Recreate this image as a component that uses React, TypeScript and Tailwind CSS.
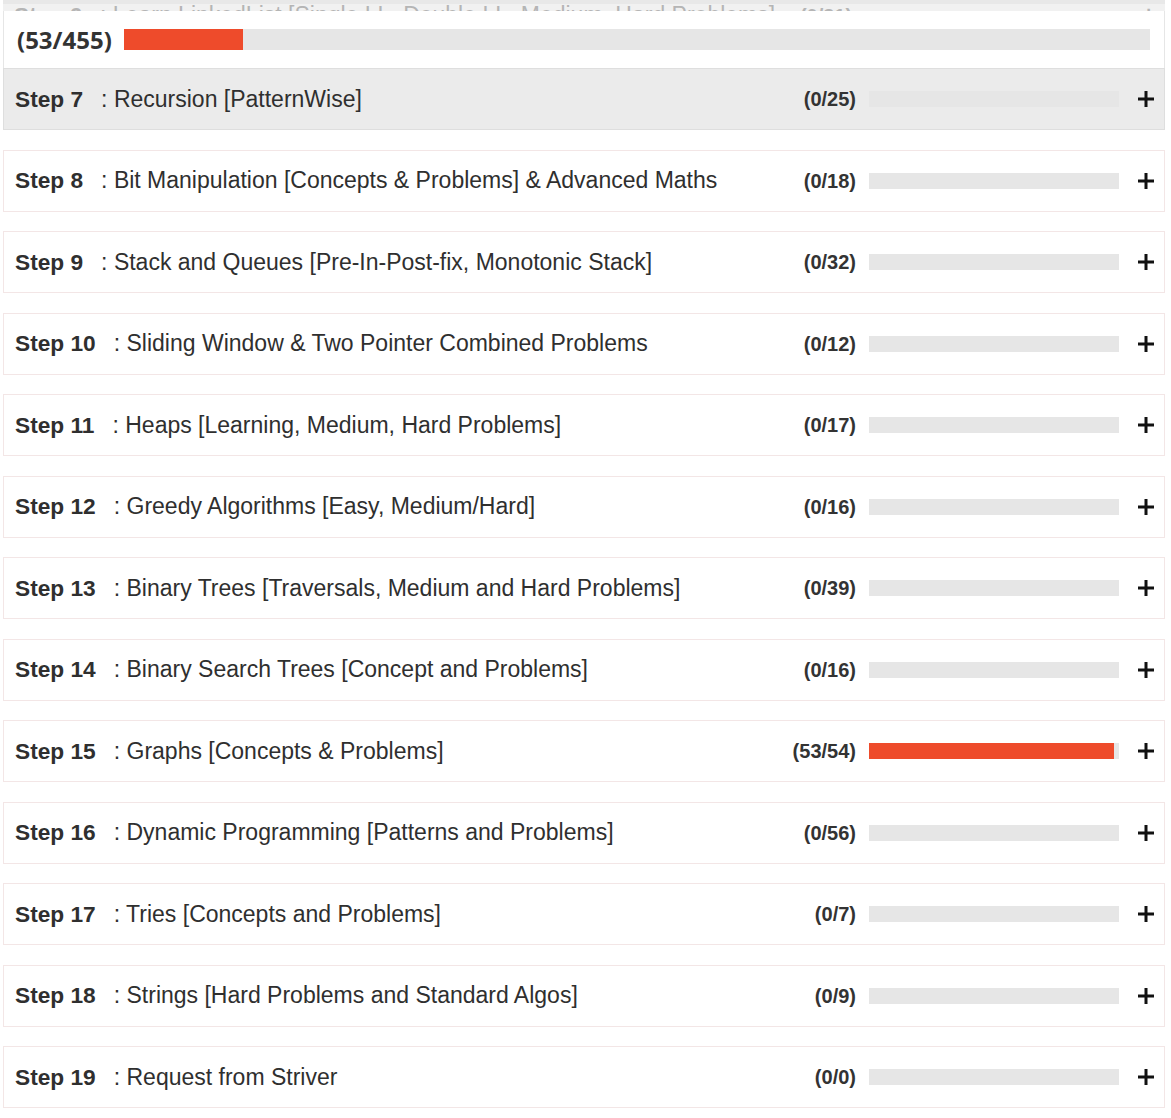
import React from "react";

interface Step {
    n: number;
    title: string;
    done: number;
    total: number;
}

const steps: Step[] = [
    { n: 7, title: "Recursion [PatternWise]", done: 0, total: 25 },
    { n: 8, title: "Bit Manipulation [Concepts & Problems] & Advanced Maths", done: 0, total: 18 },
    { n: 9, title: "Stack and Queues [Pre-In-Post-fix, Monotonic Stack]", done: 0, total: 32 },
    { n: 10, title: "Sliding Window & Two Pointer Combined Problems", done: 0, total: 12 },
    { n: 11, title: "Heaps [Learning, Medium, Hard Problems]", done: 0, total: 17 },
    { n: 12, title: "Greedy Algorithms [Easy, Medium/Hard]", done: 0, total: 16 },
    { n: 13, title: "Binary Trees [Traversals, Medium and Hard Problems]", done: 0, total: 39 },
    { n: 14, title: "Binary Search Trees [Concept and Problems]", done: 0, total: 16 },
    { n: 15, title: "Graphs [Concepts & Problems]", done: 53, total: 54 },
    { n: 16, title: "Dynamic Programming [Patterns and Problems]", done: 0, total: 56 },
    { n: 17, title: "Tries [Concepts and Problems]", done: 0, total: 7 },
    { n: 18, title: "Strings [Hard Problems and Standard Algos]", done: 0, total: 9 },
    { n: 19, title: "Request from Striver", done: 0, total: 0 },
];

function Plus() {
    return (
        <svg className="w-[16px] h-[16px]" viewBox="0 0 16 16" fill="none">
            <path d="M8 0v16M0 8h16" stroke="#111" strokeWidth={3} />
        </svg>
    );
}

function StepRow({ step, active }: { step: Step; active?: boolean }) {
    const pct = step.total ? (step.done / step.total) * 100 : 0;
    return (
        <div
            className={`flex items-center h-[62px] pl-[11px] pr-[10px] border ${
                active ? "bg-[#ebebeb] border-[#dedede]" : "bg-white border-[#f3e6e6]"
            }`}
        >
            {/* Step label + title */}
            <div className="flex-1 flex items-center text-[#2f2f2f] whitespace-nowrap">
                <span className="font-bold text-[22.7px]">Step {step.n}</span>
                <span className="ml-[18px] text-[23px]">: {step.title}</span>
            </div>

            {/* Count */}
            <div className="w-[120px] text-right font-bold text-[20px] text-[#333]">
                ({step.done}/{step.total})
            </div>

            {/* Progress bar */}
            <div className="ml-[13px] w-[250px] h-[16px] bg-[#e6e6e6]">
                <div className="h-full bg-[#ee4b2b]" style={{ width: `${pct}%` }}></div>
            </div>

            <div className="ml-[19px] flex items-center">
                <Plus />
            </div>
        </div>
    );
}

export default function App() {
    const done = 53;
    const total = 455;
    return (
        <div className="min-h-screen bg-white font-['Liberation_Sans',Arial,sans-serif]">
            <div className="ml-[3px] w-[1162px]">
                <div className="h-[11px] overflow-hidden bg-[#f1f1f1] border-t-[4px] border-[#e8e8e8]">
                    <div className="flex items-start pl-[11px] pr-[10px] leading-none text-[#b5b5b5] whitespace-nowrap">
                        <span className="font-bold text-[22.7px]">Step 6</span>
                        <span className="ml-[18px] flex-1 text-[23px]">
                            : Learn LinkedList [Single LL, Double LL, Medium, Hard Problems]
                        </span>
                        <span className="font-bold text-[20px] mr-[290px] mt-[2px]">(0/31)</span>
                        <span className="font-bold text-[22px]">+</span>
                    </div>
                </div>

                {/* Overall progress header */}
                <div className="flex items-center h-[57px] pl-[13px] pr-[14px] bg-white border-x border-[#e6e6e6]">
                    <span className="font-['Open_Sans',sans-serif] font-bold text-[24px] text-[#333] leading-none">
                        ({done}/{total})
                    </span>
                    <div className="ml-[12px] flex-1 h-[21px] bg-[#e6e6e6]">
                        <div className="h-full bg-[#ee4b2b]" style={{ width: `${(done / total) * 100}%` }}></div>
                    </div>
                </div>

                <div className="flex flex-col gap-[19.5px]">
                    {steps.map((s, i) => (
                        <StepRow key={s.n} step={s} active={i === 0} />
                    ))}
                </div>
            </div>
        </div>
    );
}
